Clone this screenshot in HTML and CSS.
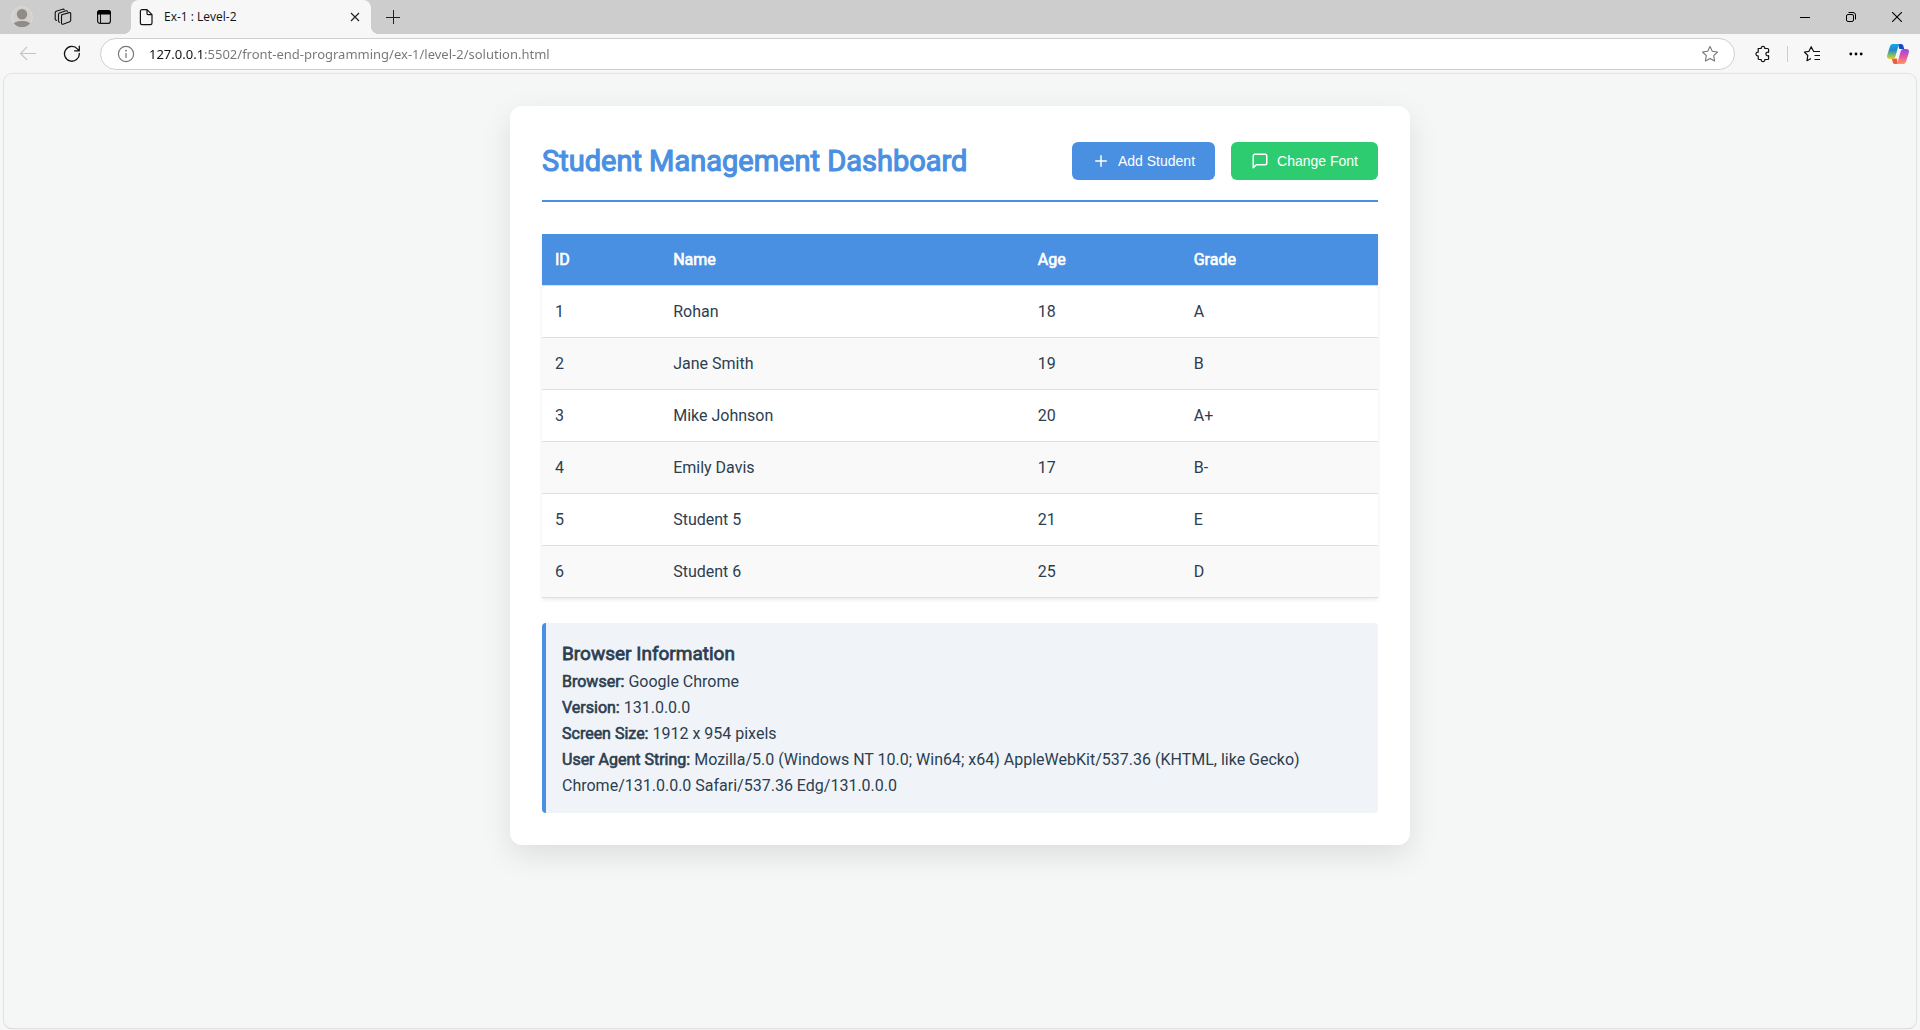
FILE: index.html
```html
<!DOCTYPE html>
<html lang="en">
<head>
<meta charset="utf-8">
<title>Ex-1 : Level-2</title>
<link rel="stylesheet" href="styles.css">
</head>
<body>
<header class="chrome">
  <div class="tabstrip">
    <div class="strip-tools">
      <button class="strip-btn" aria-label="Profile">
        <svg width="22" height="22" viewBox="0 0 22 22"><circle cx="11" cy="11" r="10.3" fill="#d3d0cc" stroke="#dedbd7"/><circle cx="11" cy="8.3" r="5.2" fill="#8f8b86"/><path d="M2.8 17.2C4.8 15.6 8 15 11 15s6.200.6 8.200 2.200A10.300 10.300 0 0 1 11 21.300a10.300 10.300 0 0 1-8.200-4.100z" fill="#8f8b86"/></svg>
      </button>
      <button class="strip-btn" aria-label="Workspaces">
        <svg width="18" height="18" viewBox="0 0 18 18" fill="none" stroke="#111" stroke-width="1.100" stroke-linejoin="round" stroke-linecap="round"><path d="M7.600 6.700 15.400 4.600Q16.700 4.400 16.700 5.600V12.400Q16.600 13.400 15.700 13.700L9 16.200Q7.600 16.500 7.500 15.200V8Q7.500 7 8.500 6.500M5.600 14.300Q4.500 14.200 4.500 13V6.500Q4.500 5.400 5.400 5L12 2.800Q13.200 2.500 13.500 3.400M2.500 12.400Q1.200 12.200 1.200 11V4.700Q1.200 3.600 2.200 3.200L8.700 1.200Q9.900.9 10.200 1.800"/></svg>
      </button>
      <button class="strip-btn" aria-label="Tab actions">
        <svg width="16" height="16" viewBox="0 0 16 16"><rect x="1.600" y="1.600" width="12.800" height="12.800" rx="2.500" fill="none" stroke="#111" stroke-width="1.200"/><path d="M1 5V4a3 3 0 0 1 3-3h8a3 3 0 0 1 3 3v1.500H1z" fill="#000"/><path d="M4.500 5v9" stroke="#111" stroke-width="1.100"/></svg>
      </button>
    </div>
    <div class="tab">
      <svg width="14" height="18" viewBox="0 0 14 18" fill="none" stroke="#111" stroke-width="1.200" stroke-linejoin="round"><path d="M3 1.600h5l5 5V15a1.600 1.600 0 0 1-1.600 1.600H3A1.600 1.600 0 0 1 1.400 15V3.200A1.600 1.600 0 0 1 3 1.600zM8 1.800V5.500q0 1.100 1.100 1.100h3.700"/></svg>
      <span class="tab-title">Ex-1 : Level-2</span>
      <button class="tab-close" aria-label="Close tab">
        <svg width="10" height="10" viewBox="0 0 10 10" stroke="#222" stroke-width="1.200"><path d="M1 1l8 8M9 1L1 9"/></svg>
      </button>
    </div>
    <button class="strip-btn new-tab" aria-label="New tab">
      <svg width="14" height="14" viewBox="0 0 14 14" stroke="#222" stroke-width="1"><path d="M0 7.500h14M7.500 0v14"/></svg>
    </button>
    <div class="window-controls">
      <button aria-label="Minimize"><svg width="10" height="10" viewBox="0 0 10 10" stroke="#000"><path d="M0 5.500h10"/></svg></button>
      <button aria-label="Restore"><svg width="10" height="10" viewBox="0 0 10 10" fill="none" stroke="#000"><rect x=".5" y="2.500" width="7" height="7" rx="1.500"/><path d="M2.500.5H7A2.500 2.500 0 0 1 9.500 3v4.500"/></svg></button>
      <button aria-label="Close"><svg width="10" height="10" viewBox="0 0 10 10" stroke="#000" stroke-width="1.100"><path d="M0 0l10 10M10 0L0 10"/></svg></button>
    </div>
  </div>

  <div class="toolbar">
    <div class="nav-tools">
      <button aria-label="Back"><svg width="18" height="16" viewBox="0 0 18 16" fill="none" stroke="#c4c4c4" stroke-width="1.100"><path d="M17 7.500H1.500M8 1L1.500 7.500 8 14"/></svg></button>
      <button aria-label="Refresh"><svg width="18" height="18" viewBox="0 0 18 18" fill="none" stroke="#111" stroke-width="1.300" stroke-linecap="round" stroke-linejoin="round"><path d="M16.300 8.500A7.400 7.400 0 1 1 14.600 4.100L16.200 5.700M16.300 1.200V5.800H11.600"/></svg></button>
    </div>
    <div class="address">
      <svg width="18" height="18" viewBox="0 0 18 18" fill="none" stroke="#767676" stroke-width="1.200"><circle cx="9" cy="9" r="7.600"/><path d="M9 8v5"/><circle cx="9" cy="5.700" r=".9" fill="#767676" stroke="none"/></svg>
      <input class="url" type="text" aria-label="Address" value="127.0.0.1:5502/front-end-programming/ex-1/level-2/solution.html">
      <button class="star" aria-label="Add to favorites"><svg width="18" height="18" viewBox="0 0 18 18" fill="none" stroke="#777" stroke-width="1.100" stroke-linejoin="round"><path d="M9 1.500l2.300 4.800 5.200.7-3.800 3.700.9 5.300L9 13.500 4.400 16l.9-5.300L1.500 7l5.200-.7z"/></svg></button>
    </div>
    <div class="side-tools">
      <button aria-label="Extensions"><svg width="16" height="18" viewBox="0 0 16 18" fill="none" stroke="#111" stroke-width="1.200" stroke-linejoin="round"><path d="M3.200 3.500H6.200C6 2 7 1.300 8 1.300S10 2 9.800 3.500H12.600Q13.600 3.500 13.600 4.500V7.300C12 6.900 10.900 7.900 10.900 9s1.100 2.100 2.700 1.700V13.500Q13.600 14.500 12.600 14.500H9.800C10 16 9 16.700 8 16.700S6 16 6.200 14.500H4.200Q3.200 14.500 3.200 13.500V10.900C1.700 11.100 1 10 1 9S1.700 6.900 3.200 7.100z"/></svg></button>
      <span class="divider"></span>
      <button aria-label="Favorites"><svg width="18" height="18" viewBox="0 0 18 18" fill="none" stroke="#111" stroke-width="1.200" stroke-linejoin="round"><path d="M12.300 6.500L10.500 6.300 8.200 1.700 6 6.300 1.400 7 4.800 10.500 4 15.700 8 13.400M11.500 6.500H17M11.500 10.500H17M11.500 14.500H17"/></svg></button>
      <button aria-label="Settings and more"><svg width="14" height="4" viewBox="0 0 14 4"><circle cx="1.800" cy="2" r="1.400"/><circle cx="7" cy="2" r="1.400"/><circle cx="12.200" cy="2" r="1.400"/></svg></button>
      <button class="copilot" aria-label="Copilot">
        <svg width="22" height="20" viewBox="0 0 22 20">
          <defs>
            <linearGradient id="cool" x1="0" y1="0" x2="0" y2="1"><stop offset="0" stop-color="#14a7e8"/><stop offset=".4" stop-color="#2587cf"/><stop offset=".75" stop-color="#7fc064"/><stop offset="1" stop-color="#f0cb21"/></linearGradient>
            <linearGradient id="warm" x1="0" y1="0" x2="0" y2="1"><stop offset="0" stop-color="#9148e8"/><stop offset=".5" stop-color="#e455a6"/><stop offset="1" stop-color="#ff9a57"/></linearGradient>
          </defs>
          <path d="M11 0h3.200q1.500 0 2 1.600l1 3.500h-4.800z" fill="#1746c8"/>
          <path d="M11 20H8q-1.600 0-2.100-1.500l-1.100-4h5z" fill="#ee5a42"/>
          <path d="M5.700 0H13q-1 0-1.500 1.600L8.300 12.800Q7.600 15 5.500 15H3Q-.7 15 .2 11.200L3 2.200Q3.800 0 5.700 0z" fill="url(#cool)"/>
          <path d="M16.300 20H9q1 0 1.500-1.600L13.700 7.200Q14.400 5 16.500 5H19q3.700 0 2.800 3.800l-2.800 9Q18.200 20 16.300 20z" fill="url(#warm)"/>
        </svg>
      </button>
    </div>
  </div>
</header>

<main class="viewport">
  <section class="card">
    <div class="card-head">
      <h1>Student Management Dashboard</h1>
      <div class="actions">
        <button class="btn btn-add"><svg width="18" height="18" viewBox="0 0 24 24" fill="none" stroke="currentColor" stroke-width="2" stroke-linecap="round" stroke-linejoin="round"><path d="M12 5v14M5 12h14"/></svg>Add Student</button>
        <button class="btn btn-font"><svg width="18" height="18" viewBox="0 0 24 24" fill="none" stroke="currentColor" stroke-width="2" stroke-linecap="round" stroke-linejoin="round"><path d="M21 15a2 2 0 0 1-2 2H7l-4 4V5a2 2 0 0 1 2-2h14a2 2 0 0 1 2 2z"/></svg>Change Font</button>
      </div>
    </div>

    <table class="students">
      <thead>
        <tr><th scope="col">ID</th><th scope="col">Name</th><th scope="col">Age</th><th scope="col">Grade</th></tr>
      </thead>
      <tbody>
        <tr><td>1</td><td>Rohan</td><td>18</td><td>A</td></tr>
        <tr><td>2</td><td>Jane Smith</td><td>19</td><td>B</td></tr>
        <tr><td>3</td><td>Mike Johnson</td><td>20</td><td>A+</td></tr>
        <tr><td>4</td><td>Emily Davis</td><td>17</td><td>B-</td></tr>
        <tr><td>5</td><td>Student 5</td><td>21</td><td>E</td></tr>
        <tr><td>6</td><td>Student 6</td><td>25</td><td>D</td></tr>
      </tbody>
    </table>

    <div class="info">
      <h2>Browser Information</h2>
      <p><strong>Browser:</strong> Google Chrome</p>
      <p><strong>Version:</strong> 131.0.0.0</p>
      <p><strong>Screen Size:</strong> 1912 x 954 pixels</p>
      <p><strong>User Agent String:</strong> Mozilla/5.0 (Windows NT 10.0; Win64; x64) AppleWebKit/537.36 (KHTML, like Gecko) Chrome/131.0.0.0 Safari/537.36 Edg/131.0.0.0</p>
    </div>
  </section>
</main>
</body>
</html>
```

FILE: styles.css
```css
:root {
  --blue: #4a90e2;
  --green: #2ecc71;
  --ink: #2c3e50;
  --chrome: #f7f7f7;
  --strip: #cdcdcd;
}

* { box-sizing: border-box; }

body {
  margin: 0;
  min-height: 100vh;
  display: flex;
  flex-direction: column;
  background: var(--chrome);
  color: var(--ink);
  font: 16px/26px Roboto, sans-serif;
}

h1, h2, p { margin: 0; }

button {
  display: flex;
  align-items: center;
  justify-content: center;
  padding: 0;
  border: 0;
  background: none;
}

/* Browser frame */
.chrome { font-family: "Open Sans", "Noto Sans", sans-serif; }

.tabstrip {
  display: flex;
  height: 34px;
  background: var(--strip);
}

.strip-tools {
  display: flex;
  gap: 9px;
  padding: 0 11px 0 6px;
}

.strip-btn { width: 32px; }
.new-tab { margin-left: 6px; }

.tab {
  position: relative;
  display: flex;
  align-items: center;
  width: 240px;
  padding: 0 6px 0 8px;
  gap: 11px;
  border-radius: 8px 8px 0 0;
  background: var(--chrome);
}

/* Curved feet where the tab meets the toolbar */
.tab::before,
.tab::after {
  content: "";
  position: absolute;
  bottom: 0;
  width: 8px;
  height: 8px;
}

.tab::before {
  left: -8px;
  background: radial-gradient(circle at 0 0, var(--strip) 8px, var(--chrome) 8px);
}

.tab::after {
  right: -8px;
  background: radial-gradient(circle at 100% 0, var(--strip) 8px, var(--chrome) 8px);
}

.tab-title {
  flex: 1;
  color: #111;
  font-size: 12px;
  line-height: 16px;
}

.tab-close { width: 20px; height: 20px; }

.window-controls {
  display: flex;
  margin-left: auto;
}

.window-controls button { width: 46px; }

.toolbar {
  display: flex;
  align-items: center;
  gap: 10px;
  height: 40px;
  padding: 0 4px 0 10px;
}

.nav-tools,
.side-tools {
  display: flex;
  align-items: center;
}

.nav-tools { gap: 8px; }

.nav-tools button,
.side-tools button {
  width: 36px;
  height: 32px;
}

.address {
  flex: 1;
  display: flex;
  align-items: center;
  height: 32px;
  padding: 0 15px 0 16px;
  border: 1px solid #cfcfcf;
  border-radius: 16px;
  background: #fff;
}

.url {
  flex: 1;
  height: 28px;
  margin: 0 14px;
  padding: 0;
  border: 0;
  outline: 0;
  font: 13px/20px "Noto Sans", "Open Sans", sans-serif;
  color: transparent;
  background: linear-gradient(90deg, #111 54px, #757575 54px) text;
}

.star { width: 18px; }

.divider {
  width: 1px;
  height: 16px;
  margin: 0 6px;
  background: #cfcfcf;
}

.side-tools button + button { margin-left: 8px; }
.side-tools .copilot { margin-left: 6px; }

/* Page */
.viewport {
  flex: 1;
  margin: 0 4px 2px;
  padding: 32px;
  border-radius: 8px;
  background: #f4f7f6;
  box-shadow: 0 0 1px 1px #e2e2e2, 0 1px 1px #ccc;
}

.card {
  max-width: 900px;
  margin: 0 auto;
  padding: 32px;
  border-radius: 12px;
  background: #fff;
  box-shadow: 0 10px 30px rgba(0, 0, 0, 0.1);
}

.card-head {
  display: flex;
  align-items: center;
  justify-content: space-between;
  margin-bottom: 32px;
  padding-bottom: 16px;
  border-bottom: 2px solid var(--blue);
}

/* Headings and labels thicken the regular cut instead of using the bold one */
h1, h2, th, strong {
  font-weight: 400;
  -webkit-text-stroke: 0.04em currentColor;
}

h1 {
  color: var(--blue);
  font-size: 29px;
  line-height: 46px;
}

.actions { display: flex; gap: 16px; }

.btn {
  gap: 8px;
  height: 38px;
  padding: 0 20px;
  border-radius: 6px;
  color: #fff;
  font: 14px/16px "Liberation Sans", Arial, sans-serif;
}

.btn-add { background: var(--blue); }
.btn-font { background: var(--green); }

.students {
  width: 100%;
  margin-bottom: 25px;
  border-spacing: 0;
  box-shadow: 0 2px 4px rgba(0, 0, 0, 0.08);
}

.students th,
.students td {
  padding: 13px 13px 12px;
  border-bottom: 1px solid #dfdfdf;
  text-align: left;
}

.students th {
  color: #fff;
  background: var(--blue);
}

.students tbody tr:nth-child(even) { background: #f9f9f9; }

.info {
  padding: 16px 16px 14px;
  border-left: 4px solid var(--blue);
  border-radius: 4px;
  background: #f0f4f8;
}

.info h2 {
  font-size: 19px;
  line-height: 30px;
}
```
